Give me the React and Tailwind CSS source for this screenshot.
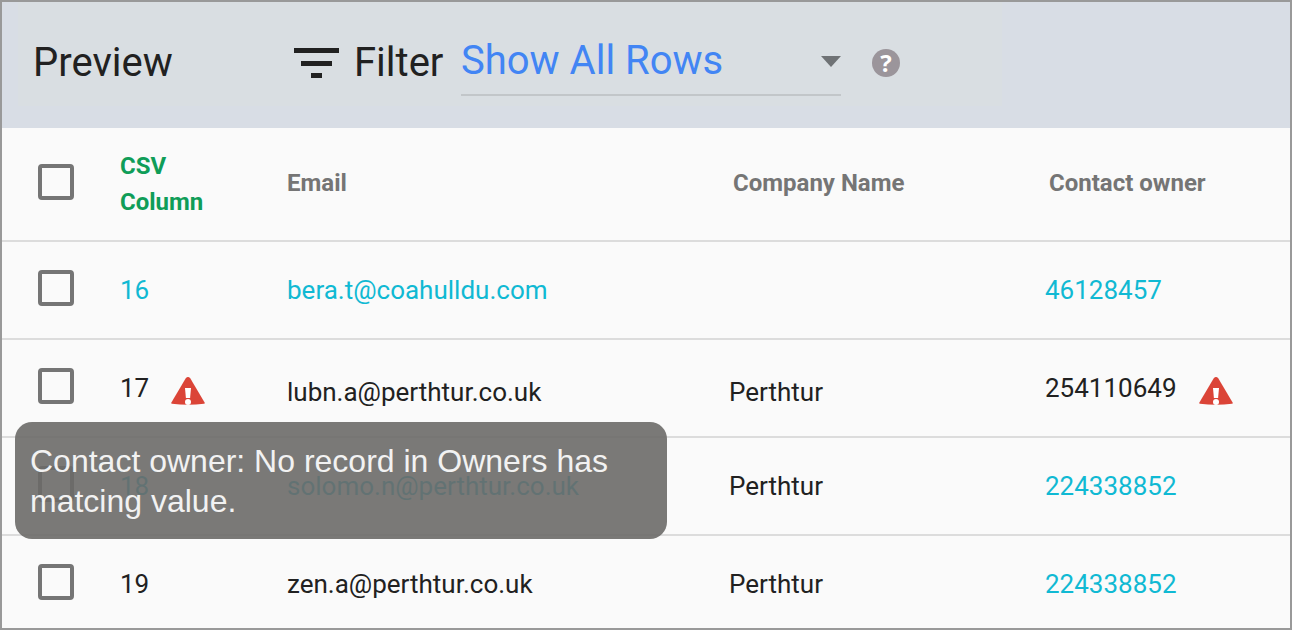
import { useState } from 'react';

const rows = [
  { id: 16, email: 'bera.t@coahulldu.com', company: '', owner: '46128457', idColor: 'text-[#10b9d3]', emailColor: 'text-[#10b9d3]', ownerColor: 'text-[#10b9d3]' },
  { id: 17, email: 'lubn.a@perthtur.co.uk', company: 'Perthtur', owner: '254110649', error: 'Contact owner: No record in Owners has matcing value.' },
  { id: 18, email: 'solomo.n@perthtur.co.uk', company: 'Perthtur', owner: '224338852', idColor: 'text-[#10b9d3]', emailColor: 'text-[#10b9d3]', ownerColor: 'text-[#10b9d3]' },
  { id: 19, email: 'zen.a@perthtur.co.uk', company: 'Perthtur', owner: '224338852', ownerColor: 'text-[#10b9d3]' },
];

const Checkbox = ({ label, checked, onChange }) => (
  <input
    type="checkbox"
    aria-label={label}
    checked={checked}
    onChange={onChange}
    className="block size-9 appearance-none rounded-[4px] border-4 border-[#757575] checked:bg-[#757575]"
  />
);

const FilterIcon = () => (
  <svg className="h-8 w-[46px]" viewBox="0 0 46 32" fill="#212121" aria-hidden="true">
    <rect x="0" y="1" width="45" height="5" />
    <rect x="7" y="14" width="31" height="5" />
    <rect x="17" y="26" width="11" height="5" />
  </svg>
);

const WarningIcon = () => (
  <svg className="mt-1.5 h-7 w-[34px] shrink-0" viewBox="0 0 34 28" aria-hidden="true">
    <path d="M14.6 1.4Q17 -1.2 19.4 1.4L33.6 25.4Q34.2 26.6 33 26.8Q17 28.8 1 26.8Q-.2 26.6 .4 25.4Z" fill="#db4437" />
    <path d="M14 11h6l-.9 10h-4.2z" fill="#fff" />
    <circle cx="17" cy="25" r="3" fill="#fff" />
  </svg>
);

const App = () => {
  const [filter, setFilter] = useState('all');
  const [selected, setSelected] = useState([]);

  const toggleRow = (id) => {
    setSelected(prev => (prev.includes(id) ? prev.filter(rowId => rowId !== id) : [...prev, id]));
  };

  const toggleAll = () => {
    setSelected(prev => (prev.length === rows.length ? [] : rows.map(row => row.id)));
  };

  return (
    <div className="h-screen overflow-hidden border-2 border-[#999] bg-[#fafafa] font-['Roboto',sans-serif] text-[#212121]">
      <header className="flex h-[126px] items-start bg-[#d8dde5] pl-4">
        <div className="flex h-[104px] items-center bg-[#d9dee2] pl-[15px] pr-[102px] pt-[18px] text-[40px] leading-[48px]">
          <h1 className="w-[261px]">Preview</h1>
          <FilterIcon />
          <label htmlFor="row-filter" className="ml-[14px] w-[107px]">Filter</label>
          <div className="relative w-[380px]">
            <select
              id="row-filter"
              value={filter}
              onChange={(e) => setFilter(e.target.value)}
              className="block h-[66px] w-full appearance-none border-b-2 border-[#c2c6c9] pb-0.5 text-[#4285f4]"
            >
              <option value="all">Show All Rows</option>
              <option value="errors">Show Rows With Errors</option>
            </select>
            <svg className="pointer-events-none absolute right-0 top-[26px] h-[11px] w-5" viewBox="0 0 20 11" aria-hidden="true">
              <path d="M0 0h20L10 11z" fill="#6f7275" />
            </svg>
          </div>
          <button type="button" aria-label="Help" className="ml-[31px] flex size-7 items-center justify-center rounded-full bg-[#9b959b] font-['Open_Sans',sans-serif] text-2xl font-bold text-white">
            ?
          </button>
        </div>
      </header>

      <table className="w-full table-fixed border-collapse text-left">
        <colgroup>
          <col className="w-[118px]" />
          <col className="w-[167px]" />
          <col className="w-[442px]" />
          <col className="w-[316px]" />
          <col />
        </colgroup>
        <thead className="text-2xl leading-9 text-[#757575]">
          <tr className="h-[113px] border-b-2 border-[#dcdcdc]">
            <th className="pb-1 pl-9">
              <Checkbox label="Select all rows" checked={selected.length === rows.length} onChange={toggleAll} />
            </th>
            <th className="pr-16 font-bold text-[#0f9d58]">CSV Column</th>
            <th className="pb-0.5 font-bold">Email</th>
            <th className="pb-0.5 pl-1 font-bold">Company Name</th>
            <th className="pb-0.5 pl-1 font-bold">Contact owner</th>
          </tr>
        </thead>
        <tbody className="text-[26px] leading-8">
          {rows.map((row) => (
            <tr key={row.id} className="h-[98px] border-b-2 border-[#dcdcdc]">
              <td className="relative pb-1 pl-9">
                <Checkbox label={`Select row ${row.id}`} checked={selected.includes(row.id)} onChange={() => toggleRow(row.id)} />
                {row.error && (
                  <div role="tooltip" className="absolute left-[13px] top-[82px] z-10 w-[652px] rounded-[17px] bg-[#6b6a68]/90 px-[15px] pb-[18px] pt-[19px] font-['Liberation_Sans',sans-serif] text-[32px] leading-10 text-[#f2f2f2]">
                    {row.error}
                  </div>
                )}
              </td>
              <td className={row.idColor}>
                <div className="flex items-center gap-[22px]">
                  {row.id}
                  {row.error && <WarningIcon />}
                </div>
              </td>
              <td className={row.error ? 'pt-2' : row.emailColor}>{row.email}</td>
              <td className={row.error ? 'pt-2' : ''}>{row.company}</td>
              <td className={row.ownerColor}>
                <div className="flex items-center gap-[22px]">
                  {row.owner}
                  {row.error && <WarningIcon />}
                </div>
              </td>
            </tr>
          ))}
        </tbody>
      </table>
    </div>
  );
};

export default App;
